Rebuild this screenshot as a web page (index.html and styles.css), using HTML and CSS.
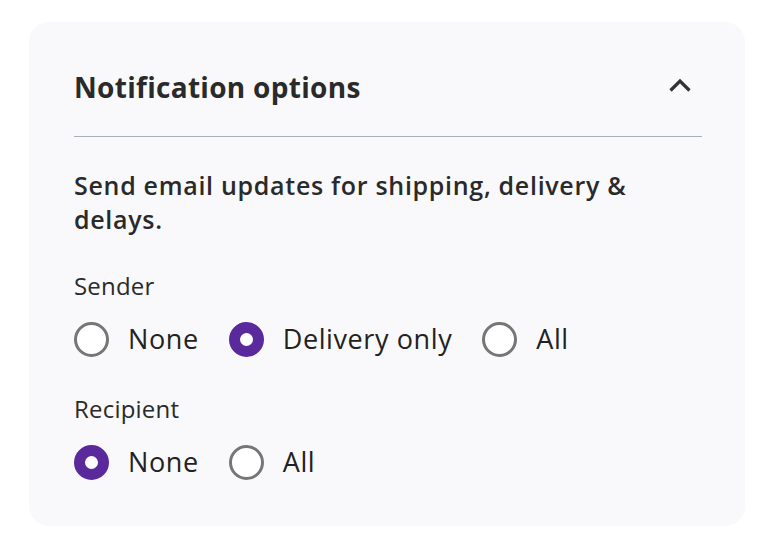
FILE: index.html
```html
<!DOCTYPE html>
<html lang="en">
<head>
    <meta charset="UTF-8">
    <meta name="viewport" content="width=device-width, initial-scale=1.0">
    <title>Notification options</title>
    <link rel="stylesheet" href="styles.css">
</head>
<body>
    <section class="panel">
        <div class="panel-header">
            <h2>Notification options</h2>
            <button class="toggle" aria-label="Collapse">
                <svg width="24" height="16" viewBox="0 0 24 16">
                    <path d="M2.5 13.5 L12 4 L21.5 13.5" fill="none" stroke="#333333" stroke-width="3.2"/>
                </svg>
            </button>
        </div>
        <div class="panel-body">
            <p class="intro">Send email updates for shipping, delivery &amp; delays.</p>

            <div class="group">
                <div class="group-label">Sender</div>
                <div class="options">
                    <label class="option"><span class="radio"></span>None</label>
                    <label class="option"><span class="radio checked"></span>Delivery only</label>
                    <label class="option"><span class="radio"></span>All</label>
                </div>
            </div>

            <div class="group">
                <div class="group-label">Recipient</div>
                <div class="options">
                    <label class="option"><span class="radio checked"></span>None</label>
                    <label class="option"><span class="radio"></span>All</label>
                </div>
            </div>
        </div>
    </section>
</body>
</html>
```

FILE: styles.css
```css
body {
    margin: 0;
    background-color: #ffffff;
    color: #222222;
    font-family: "Open Sans", "Noto Sans", sans-serif;
}
.panel {
    margin: 22px 0 0 29px;
    width: 716px;
    height: 504px;
    box-sizing: border-box;
    padding: 0 43px 0 45px;
    background-color: #f9f9fb;
    border-radius: 20px;
}
.panel-header {
    display: flex;
    align-items: center;
    justify-content: space-between;
    height: 114px;
    border-bottom: 1px solid #a9afbe;
}
.panel-header h2 {
    margin: 0;
    padding-top: 16px;
    font-size: 28px;
    font-weight: 700;
    letter-spacing: 0.3px;
    color: #2a2a2a;
}
.toggle {
    background: none;
    border: none;
    padding: 0;
    margin: 12px 10px 0 0;
    cursor: pointer;
    display: flex;
}
.panel-body {
    padding-top: 31px;
}
.intro {
    margin: 0;
    font-size: 25px;
    font-weight: 600;
    line-height: 34px;
    letter-spacing: 0.7px;
    width: 580px;
    color: #2a2a2a;
}
.group {
    margin-top: 33px;
}
.group + .group {
    margin-top: 27px;
}
.group-label {
    font-size: 24px;
    font-weight: 500;
    line-height: 34px;
    letter-spacing: 0.2px;
    color: #2a2a2a;
}
.options {
    display: flex;
    gap: 30px;
    margin-top: 10px;
}
.option {
    display: flex;
    align-items: center;
    gap: 19px;
    font-size: 27px;
    letter-spacing: 0.6px;
    line-height: 52px;
    cursor: pointer;
}
.radio {
    width: 35px;
    height: 35px;
    box-sizing: border-box;
    border: 3px solid #767676;
    border-radius: 50%;
    background-color: #ffffff;
}
.radio.checked {
    border: 11px solid #5a2a9c;
}
```
